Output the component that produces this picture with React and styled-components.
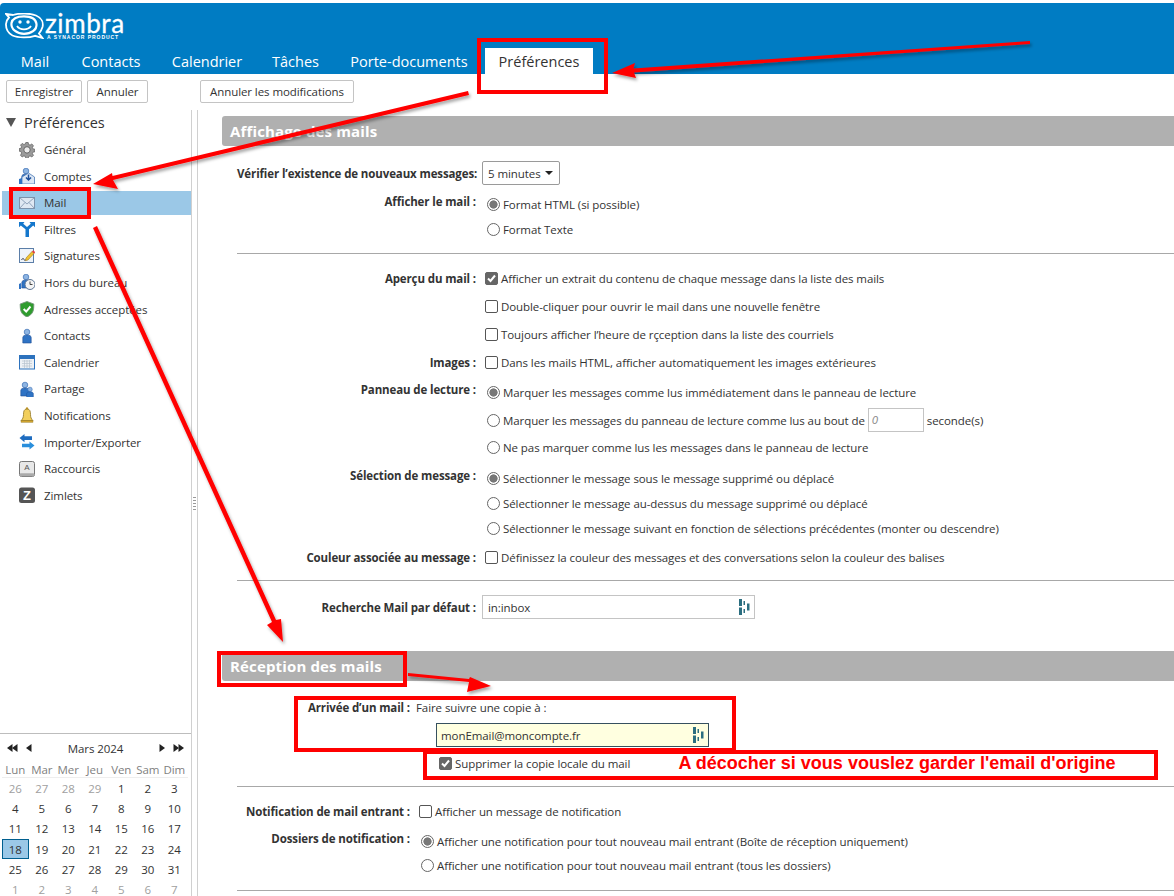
import React from "react";
import styled, { createGlobalStyle } from "styled-components";

const GlobalStyle = createGlobalStyle`
  html, body {
    margin: 0;
    padding: 0;
    background: #fff;
    font-family: "Open Sans", "Noto Sans", sans-serif;
    font-size: 11.5px;
    letter-spacing: -0.08px;
    color: #333;
  }
`;

const Page = styled.div`
  position: relative;
  width: 1174px;
  height: 896px;
  overflow: hidden;
  display: flex;
  flex-direction: column;
  background: #fff;
`;

const Header = styled.header`
  margin-top: 3px;
  height: 71px;
  flex: none;
  background: #007cc3;
  border-top-left-radius: 4px;
  display: flex;
  flex-direction: column;
`;

const Brand = styled.div`
  height: 45px;
  padding: 9px 0 0 5px;
  box-sizing: border-box;
  display: flex;
  gap: 1px;
  color: #fff;
`;

const BrandText = styled.div`
  display: flex;
  flex-direction: column;
  width: 84px;
`;

const BrandName = styled.span`
  font-family: Lato, sans-serif;
  font-size: 26px;
  line-height: 23px;
  font-weight: 400;
  letter-spacing: 0.6px;
  -webkit-text-stroke: 0.3px #fff;
`;

const BrandSub = styled.span`
  font-family: "Liberation Sans", sans-serif;
  font-size: 5px;
  line-height: 5px;
  font-weight: 700;
  letter-spacing: 0.95px;
  padding-left: 2px;
  white-space: nowrap;
`;

const Tabs = styled.nav`
  display: flex;
  gap: 1px;
  padding-left: 5px;
  height: 26px;
`;

const Tab = styled.div`
  width: ${(p) => p.$w}px;
  text-align: center;
  font-size: 14.5px;
  letter-spacing: 0;
  line-height: 28px;
  color: ${(p) => (p.$active ? "#333" : "#fff")};
  background: ${(p) => (p.$active ? "#fff" : "transparent")};
`;

const Toolbar = styled.div`
  height: 36px;
  flex: none;
  padding: 6px 0 0 6px;
  box-sizing: border-box;
  display: flex;
  align-items: flex-start;
  gap: 5px;
`;

const Button = styled.button`
  width: ${(p) => p.$w}px;
  height: 23px;
  padding: 0;
  margin-left: ${(p) => p.$gap || 0}px;
  border: 1px solid #c4c4c4;
  border-radius: 2px;
  background: #fff;
  color: #333;
  font: inherit;
  letter-spacing: inherit;
  line-height: 21px;
`;

const Body = styled.div`
  flex: 1;
  min-height: 0;
  display: flex;
`;

const Sidebar = styled.aside`
  width: 191px;
  flex: none;
  border-right: 1px solid #d0d0d0;
  display: flex;
  flex-direction: column;
  overflow: hidden;
`;

const Tree = styled.div`
  height: 623px;
  flex: none;
  box-sizing: border-box;
`;

const TreeHead = styled.div`
  height: 27.5px;
  box-sizing: border-box;
  padding: 0 0 3px 6px;
  display: flex;
  align-items: center;
  font-size: 14.5px;
  letter-spacing: 0;
  gap: 8px;
`;

const TreeArrow = styled.span`
  width: 0;
  height: 0;
  border-left: 5px solid transparent;
  border-right: 5px solid transparent;
  border-top: 9px solid #555;
`;

const TreeItem = styled.div`
  height: 24px;
  margin: 0 0 2.6px 2px;
  padding-left: 17px;
  display: flex;
  align-items: center;
  gap: 9px;
  background: ${(p) => (p.$selected ? "#9bc8e7" : "transparent")};
`;

const Calendar = styled.div`
  flex: none;
  border-top: 1px solid #bdbdbd;
`;

const CalNav = styled.div`
  height: 28px;
  padding: 0 7px;
  display: flex;
  align-items: center;
  justify-content: space-between;
`;

const CalArrows = styled.div`
  display: flex;
  gap: 8px;
  align-items: center;
`;

const CalGrid = styled.div`
  display: grid;
  grid-template-columns: repeat(7, 26.5px);
  padding-left: 2px;
`;

const CalHead = styled.div`
  height: 15px;
  line-height: 15px;
  text-align: center;
  color: #808080;
  border-bottom: 1px solid #eee;
`;

const CalDay = styled.div`
  height: 20.2px;
  line-height: 19px;
  box-sizing: border-box;
  text-align: center;
  color: ${(p) => (p.$muted ? "#a0a0a0" : "#333")};
  background: ${(p) => (p.$today ? "#9bc8e7" : "transparent")};
  border: 1px solid ${(p) => (p.$today ? "#005f8f" : "transparent")};
`;

const Sash = styled.div`
  width: 5px;
  flex: none;
  height: 786px;
  padding-top: 387px;
  box-sizing: border-box;
  display: flex;
  justify-content: center;
`;

const SashGrip = styled.div`
  width: 3px;
  height: 13px;
  background: repeating-linear-gradient(#999 0 1px, #fff 1px 3px);
`;

const Main = styled.main`
  flex: 1;
  min-width: 0;
  border-left: 1px solid #d0d0d0;
  padding: 6px 0 0 24px;
  overflow: hidden;
`;

const SectionTitle = styled.h2`
  margin: ${(p) => p.$top || 0}px 0 0;
  height: 30px;
  padding-left: 8px;
  background: #b0b0b0;
  border-radius: 3px 0 0 3px;
  color: #fff;
  font-size: 15px;
  letter-spacing: 0.15px;
  line-height: 31px;
  font-weight: 700;
`;

const Form = styled.div`
  padding-left: 15px;
`;

const Row = styled.div`
  height: ${(p) => p.$h}px;
  margin-top: ${(p) => p.$top || 0}px;
  display: grid;
  grid-template-columns: ${(p) => p.$col || 239}px 1fr;
  align-items: center;
`;

const Label = styled.div`
  text-align: right;
  font-weight: 700;
  letter-spacing: -0.12px;
  white-space: nowrap;
  padding-bottom: ${(p) => p.$raise || 0}px;
`;

const Value = styled.div`
  display: flex;
  align-items: center;
  white-space: nowrap;
  padding-left: ${(p) => p.$indent || 0}px;
`;

const Divider = styled.hr`
  margin: ${(p) => p.$top}px 0 ${(p) => p.$bottom}px;
  border: 0;
  height: 1px;
  background: #a8a8a8;
`;

const Radio = styled.span`
  width: 13px;
  height: 13px;
  box-sizing: border-box;
  flex: none;
  margin-right: 3px;
  border-radius: 50%;
  border: 1px solid #666;
  background: ${(p) => (p.$on ? "radial-gradient(circle, #777 0 3.8px, #fff 4.4px)" : "#fff")};
`;

const Check = styled.span`
  width: 13px;
  height: 13px;
  box-sizing: border-box;
  flex: none;
  margin-right: 3px;
  border-radius: 2px;
  border: 1px solid ${(p) => (p.$on ? "#666" : "#555")};
  background: ${(p) => (p.$on ? "#666" : "#fff")};
  display: flex;
  align-items: center;
  justify-content: center;
`;

const Select = styled.div`
  width: 78px;
  height: 24px;
  box-sizing: border-box;
  margin-left: 6px;
  padding: 0 6px 0 5px;
  border: 1px solid #9a9a9a;
  border-radius: 2px;
  display: flex;
  align-items: center;
  justify-content: space-between;
`;

const Caret = styled.span`
  width: 0;
  height: 0;
  border-left: 4px solid transparent;
  border-right: 4px solid transparent;
  border-top: 4px solid #222;
`;

const Field = styled.div`
  width: ${(p) => p.$w}px;
  height: ${(p) => p.$h}px;
  box-sizing: border-box;
  margin-left: ${(p) => p.$left || 0}px;
  padding: 0 4px 0 ${(p) => p.$pad || 4}px;
  border: 1px solid ${(p) => (p.$focus ? "#36505f" : "#c4c4c4")};
  background: ${(p) => (p.$focus ? "#ffffe0" : "#fff")};
  display: flex;
  align-items: center;
  justify-content: space-between;
`;

const SmallInput = styled.span`
  width: 56px;
  height: 24px;
  box-sizing: border-box;
  margin: 0 3px;
  padding-left: 3px;
  border: 1px solid #c4c4c4;
  color: #888;
  font-style: italic;
  line-height: 22px;
`;

const Overlay = styled.svg`
  position: absolute;
  left: 0;
  top: 0;
  pointer-events: none;
`;

const Note = styled.div`
  position: absolute;
  left: 662px;
  top: 754px;
  width: 470px;
  height: 22px;
  background: #fff;
  text-align: center;
  color: #f00;
  font-family: "Liberation Sans", sans-serif;
  font-size: 18px;
  letter-spacing: 0;
  font-weight: 700;
  line-height: 18px;
  white-space: nowrap;
`;

const Logo = () => (
  <svg width="39" height="26" viewBox="0 0 39 26" fill="none" stroke="#fff" style={{ marginTop: 1 }}>
    <path d="M1 1 L8 2 C14 0 25 0 31 2.500 C37 5 38.500 10 37.500 14 C36.500 17 35.500 19 34 20.500 L37.500 25 L30 22.800 C24 25 13 25 7.500 22.500 C2 19.500 .8 15 1 11 C1.200 8 2.500 6 4 4.500 Z" strokeWidth="1.800" />
    <path d="M6.500 10 C7.500 5 13 3.300 19 3.300 C26 3.300 31 6 31.500 11 C32 17 26 20.800 19 20.800 C12 20.800 5.500 16 6.500 10 Z" strokeWidth="2.200" />
    <circle cx="15" cy="9" r="1.700" fill="#fff" stroke="none" />
    <circle cx="23" cy="9" r="1.700" fill="#fff" stroke="none" />
    <path d="M12 13 C15 17.500 23 17.500 26 13" strokeWidth="1.800" />
  </svg>
);

const Person = ({ x = 0, y = 0, c = "#2f73c4" }) => (
  <g transform={`translate(${x} ${y})`}>
    <circle cx="5" cy="3" r="2.800" fill="#8db4e2" stroke="#3c70b5" strokeWidth=".7" />
    <path d="M.8 14 V8.500 C.8 6.800 2.500 6 5 6 C7.500 6 9.200 6.800 9.200 8.500 V14 Z" fill={c} stroke="#1e4f96" strokeWidth=".6" />
  </g>
);

const icons = {
  gear: (
    <>
      <path d="M6.800.5h2.400l.4 2 1.500.6 1.700-1.100 1.700 1.700-1.100 1.700.6 1.500 2 .4v2.400l-2 .4-.6 1.500 1.100 1.700-1.700 1.700-1.700-1.100-1.500.6-.4 2H6.800l-.4-2-1.500-.6-1.700 1.100-1.700-1.700L2.600 11l-.6-1.500-2-.4V6.700l2-.4.6-1.500-1.100-1.700 1.700-1.700 1.700 1.100 1.500-.6Z" fill="#9a9a9a" stroke="#5a5a5a" strokeWidth=".7" />
      <circle cx="8" cy="7.900" r="3.200" fill="#ececec" stroke="#5a5a5a" strokeWidth=".9" />
    </>
  ),
  accounts: (
    <>
      <Person x={2} y={0} />
      <path d="M3 9 9.500 5l6 4v7H3Z" fill="#dbe6f4" stroke="#4a78b5" strokeWidth=".8" />
      <path d="M9.500 6.500v5M7 9.500 9.500 12l2.500-2.500" fill="none" stroke="#1c4f9c" strokeWidth="1.500" />
      <path d="M0 16v-5l3-1v6Z" fill="#2f73c4" />
    </>
  ),
  mail: (
    <>
      <rect x=".5" y="2.500" width="15" height="11" fill="#dfe8f3" stroke="#7d93ad" />
      <path d="M.5 2.500 8 9l7.500-6.500M.5 13.500 6 7.500M15.500 13.500 10 7.500" fill="none" stroke="#7d93ad" strokeWidth=".8" />
    </>
  ),
  filter: (
    <path d="M0 1h5.500L4.200 2.800 8 6l3.800-3.200L10.500 1H16v5.200l-1.800-1.700L10 8.300V16H6.500V8.300L1.800 4.500 0 6.200Z" fill="#1477cc" />
  ),
  signature: (
    <>
      <rect x=".5" y=".5" width="14" height="14" fill="#eef3f9" stroke="#5b7ea8" />
      <path d="M2.500 12c1-2 2-2 2.500-.5s1.500 1 2 0" fill="none" stroke="#223" strokeWidth=".8" />
      <path d="M7 10 13 3.500l2 2L9 12l-2.500.7Z" fill="#f2c230" stroke="#8a6a10" strokeWidth=".5" />
      <path d="M13 3.500l1.200-1.300 2 2L15 5.500Z" fill="#e43c3c" />
    </>
  ),
  away: (
    <>
      <Person x={2} y={0} />
      <path d="M0 15V10l2-1v6Z" fill="#2f73c4" />
      <circle cx="11" cy="10.500" r="5" fill="#f4f4f4" stroke="#5d7696" />
      <path d="M11 7.500v3h2.500" fill="none" stroke="#333" strokeWidth=".9" />
    </>
  ),
  shield: (
    <>
      <path d="M8 .5 14.800 3c0 6-.3 10-6.800 13C1.500 13 1.200 9 1.200 3Z" fill="#2f9c2e" stroke="#75947a" strokeWidth=".9" />
      <path d="M4.700 8 7.200 10.600 11.500 5.500" fill="none" stroke="#fff" strokeWidth="2" />
    </>
  ),
  contact: <Person x={3} y={1} />,
  calendar: (
    <>
      <rect x=".5" y="1.500" width="15" height="13.500" fill="#eef1f5" stroke="#2d72bd" />
      <rect x=".5" y="1.500" width="15" height="3.500" fill="#2d72bd" />
      <path d="M3 7h10M3 9.500h10M3 12h10M5.500 6v8M8 6v8M10.500 6v8" stroke="#b8c3cf" strokeWidth=".7" />
    </>
  ),
  share: (
    <>
      <Person x={1} y={1} />
      <g transform="translate(7 6) scale(.8)"><Person /></g>
    </>
  ),
  bell: (
    <>
      <circle cx="8" cy="1.500" r="1.200" fill="#c79b2c" />
      <path d="M8 2C11 2 11.500 4.500 11.500 7.500c0 3 .9 4.500 2.300 6H2.200c1.400-1.500 2.300-3 2.300-6C4.500 4.500 5 2 8 2Z" fill="#f2cf5c" stroke="#8f7422" strokeWidth=".8" />
      <rect x="2" y="13.500" width="12" height="1.800" fill="#d2a52f" stroke="#8f7422" strokeWidth=".4" />
    </>
  ),
  transfer: (
    <>
      <path d="M.5 4 5.500 0v2.300H13V6H5.500v2.300Z" fill="#1e6cc0" />
      <path d="M15.500 11.500 10.500 7.500v2.300H3v3.500h7.500V15.500Z" fill="#2a8fdc" />
    </>
  ),
  key: (
    <>
      <rect x=".5" y=".5" width="15" height="15" rx="2" fill="#e8e8e8" stroke="#777" />
      <rect x=".8" y="12.200" width="14.400" height="3" rx="1" fill="#aaa" />
      <text x="8" y="9" textAnchor="middle" fontSize="8" fontFamily="Liberation Sans" fill="#555">A</text>
    </>
  ),
  zimlet: (
    <>
      <rect x="0" y=".5" width="16" height="15.500" rx="2.500" fill="#555" />
      <text x="8" y="13" textAnchor="middle" fontSize="13" fontWeight="700" fontFamily="Liberation Sans" fill="#fff">Z</text>
    </>
  ),
};

const Icon = ({ name }) => (
  <svg width="16" height="16" viewBox="0 0 16 16">{icons[name]}</svg>
);

const FieldIcon = () => (
  <svg width="11" height="16" viewBox="0 0 11 16" fill="#2b6e80">
    <rect x="0" y="0" width="3" height="7" />
    <rect x="0" y="8.500" width="3" height="7.500" />
    <rect x="4.500" y="2" width="1.500" height="4" />
    <rect x="4.500" y="10" width="1.500" height="4" />
    <rect x="8" y="4.500" width="2.500" height="7" />
  </svg>
);

const Tick = () => (
  <svg width="11" height="11" viewBox="0 0 11 11">
    <path d="M2 5.500 4.500 8 9 2.500" fill="none" stroke="#fff" strokeWidth="2" />
  </svg>
);

const Triangles = ({ dir, n }) => (
  <svg width={n === 2 ? 11 : 6} height="8" viewBox={`0 0 ${n === 2 ? 11 : 6} 8`} fill="#222">
    {[...Array(n)].map((_, i) => (
      <path
        key={i}
        transform={`translate(${i * 5} 0)`}
        d={dir === "l" ? "M5.500 0v8L0 4Z" : "M.5 0v8L6 4Z"}
      />
    ))}
  </svg>
);

const treeItems = [
  ["gear", "Général"],
  ["accounts", "Comptes"],
  ["mail", "Mail"],
  ["filter", "Filtres"],
  ["signature", "Signatures"],
  ["away", "Hors du bureau"],
  ["shield", "Adresses acceptées"],
  ["contact", "Contacts"],
  ["calendar", "Calendrier"],
  ["share", "Partage"],
  ["bell", "Notifications"],
  ["transfer", "Importer/Exporter"],
  ["key", "Raccourcis"],
  ["zimlet", "Zimlets"],
];

const dayNames = ["Lun", "Mar", "Mer", "Jeu", "Ven", "Sam", "Dim"];
const days = [
  26, 27, 28, 29, 1, 2, 3, 4, 5, 6, 7, 8, 9, 10, 11, 12, 13, 14, 15, 16, 17, 18, 19, 20, 21, 22, 23,
  24, 25, 26, 27, 28, 29, 30, 31, 1, 2, 3, 4, 5, 6, 7,
];

const Annotations = () => (
  <Overlay width="1174" height="896" viewBox="0 0 1174 896">
    <defs>
      <filter id="shade" x="-10%" y="-10%" width="120%" height="120%">
        <feDropShadow dx="1.500" dy="2.500" stdDeviation="1.500" floodColor="#000" floodOpacity=".35" />
      </filter>
    </defs>
    <g fill="#f00" filter="url(#shade)">
      <polygon points="1030,41 1030,44 634,72.500 636,78 612,73 635,63 633.500,68.500" />
      <polygon points="468,91 469,95 113,180 118,189 93,184 112,173 112.500,176" />
      <polygon points="93,228 97,226 276,620 281,619 283,642 267,625 272,622" />
      <polygon points="408,673 408,676 469,682 467,692 491,686 470,677 469,679" />
    </g>
    <g fill="none" stroke="#f00" strokeWidth="4">
      <rect x="479" y="40" width="127" height="52" />
      <rect x="11" y="189" width="78" height="28" />
      <rect x="219" y="653" width="186" height="32" />
      <rect x="296" y="698" width="438" height="52" />
      <rect x="425" y="752" width="731" height="26" />
    </g>
  </Overlay>
);

export default function App() {
  return (
    <>
      <GlobalStyle />
      <Page>
        <Header>
          <Brand>
            <Logo />
            <BrandText>
              <BrandName>zimbra</BrandName>
              <BrandSub>A SYNACOR PRODUCT</BrandSub>
            </BrandText>
          </Brand>
          <Tabs>
            <Tab $w={60}>Mail</Tab>
            <Tab $w={90}>Contacts</Tab>
            <Tab $w={100}>Calendrier</Tab>
            <Tab $w={75}>Tâches</Tab>
            <Tab $w={150}>Porte-documents</Tab>
            <Tab $w={108} $active>Préférences</Tab>
          </Tabs>
        </Header>

        <Toolbar>
          <Button $w={76}>Enregistrer</Button>
          <Button $w={61}>Annuler</Button>
          <Button $w={154} $gap={47}>Annuler les modifications</Button>
        </Toolbar>

        <Body>
          <Sidebar>
            <Tree>
              <TreeHead>
                <TreeArrow />
                Préférences
              </TreeHead>
              {treeItems.map(([icon, label]) => (
                <TreeItem key={label} $selected={label === "Mail"}>
                  <Icon name={icon} />
                  {label}
                </TreeItem>
              ))}
            </Tree>
            <Calendar>
              <CalNav>
                <CalArrows>
                  <Triangles dir="l" n={2} />
                  <Triangles dir="l" n={1} />
                </CalArrows>
                Mars 2024
                <CalArrows>
                  <Triangles dir="r" n={1} />
                  <Triangles dir="r" n={2} />
                </CalArrows>
              </CalNav>
              <CalGrid>
                {dayNames.map((d) => (
                  <CalHead key={d}>{d}</CalHead>
                ))}
                {days.map((d, i) => (
                  <CalDay key={i} $muted={i < 4 || i > 34} $today={i === 21}>
                    {d}
                  </CalDay>
                ))}
              </CalGrid>
            </Calendar>
          </Sidebar>
          <Sash>
            <SashGrip />
          </Sash>
          <Main>
            <SectionTitle>Affichage des mails</SectionTitle>
            <Form>
              <Row $h={24} $top={15}>
                <Label>Vérifier l’existence de nouveaux messages:</Label>
                <Value>
                  <Select>
                    5 minutes
                    <Caret />
                  </Select>
                </Value>
              </Row>
              <Row $h={25} $top={7}>
                <Label $raise={6}>Afficher le mail :</Label>
                <Value $indent={11}>
                  <Radio $on />
                  Format HTML (si possible)
                </Value>
              </Row>
              <Row $h={25}>
                <span />
                <Value $indent={11}>
                  <Radio />
                  Format Texte
                </Value>
              </Row>
              <Divider $top={11} $bottom={10} />
              <Row $h={28}>
                <Label>Aperçu du mail :</Label>
                <Value $indent={9}>
                  <Check $on>
                    <Tick />
                  </Check>
                  Afficher un extrait du contenu de chaque message dans la liste des mails
                </Value>
              </Row>
              <Row $h={28}>
                <span />
                <Value $indent={9}>
                  <Check />
                  Double-cliquer pour ouvrir le mail dans une nouvelle fenêtre
                </Value>
              </Row>
              <Row $h={28}>
                <span />
                <Value $indent={9}>
                  <Check />
                  Toujours afficher l’heure de rçception dans la liste des courriels
                </Value>
              </Row>
              <Row $h={28}>
                <Label>Images :</Label>
                <Value $indent={9}>
                  <Check />
                  Dans les mails HTML, afficher automatiquement les images extérieures
                </Value>
              </Row>
              <Row $h={28} $top={2}>
                <Label $raise={6}>Panneau de lecture :</Label>
                <Value $indent={11}>
                  <Radio $on />
                  Marquer les messages comme lus immédiatement dans le panneau de lecture
                </Value>
              </Row>
              <Row $h={28}>
                <span />
                <Value $indent={11}>
                  <Radio />
                  Marquer les messages du panneau de lecture comme lus au bout de
                  <SmallInput>0</SmallInput>
                  seconde(s)
                </Value>
              </Row>
              <Row $h={26}>
                <span />
                <Value $indent={11}>
                  <Radio />
                  Ne pas marquer comme lus les messages dans le panneau de lecture
                </Value>
              </Row>
              <Row $h={26} $top={5}>
                <Label $raise={5}>Sélection de message :</Label>
                <Value $indent={11}>
                  <Radio $on />
                  Sélectionner le message sous le message supprimé ou déplacé
                </Value>
              </Row>
              <Row $h={25}>
                <span />
                <Value $indent={11}>
                  <Radio />
                  Sélectionner le message au-dessus du message supprimé ou déplacé
                </Value>
              </Row>
              <Row $h={25}>
                <span />
                <Value $indent={11}>
                  <Radio />
                  Sélectionner le message suivant en fonction de sélections précédentes (monter ou descendre)
                </Value>
              </Row>
              <Row $h={26} $top={3}>
                <Label>Couleur associée au message :</Label>
                <Value $indent={9}>
                  <Check />
                  Définissez la couleur des messages et des conversations selon la couleur des balises
                </Value>
              </Row>
              <Divider $top={10} $bottom={14} />
              <Row $h={24}>
                <Label>Recherche Mail par défaut :</Label>
                <Value>
                  <Field $w={273} $h={24} $left={6} $pad={5}>
                    in:inbox
                    <FieldIcon />
                  </Field>
                </Value>
              </Row>
            </Form>

            <SectionTitle $top={32}>Réception des mails</SectionTitle>
            <Form>
              <Row $h={20} $top={16} $col={173}>
                <Label>Arrivée d’un mail :</Label>
                <Value $indent={6}>Faire suivre une copie à :</Value>
              </Row>
              <Row $h={24} $top={6} $col={173}>
                <span />
                <Value>
                  <Field $w={273} $h={24} $left={26} $focus>
                    monEmail@moncompte.fr
                    <FieldIcon />
                  </Field>
                </Value>
              </Row>
              <Row $h={22} $top={5} $col={173}>
                <span />
                <Value $indent={29}>
                  <Check $on>
                    <Tick />
                  </Check>
                  Supprimer la copie locale du mail
                </Value>
              </Row>
              <Divider $top={12} $bottom={12} />
              <Row $h={24} $col={173}>
                <Label>Notification de mail entrant :</Label>
                <Value $indent={9}>
                  <Check />
                  Afficher un message de notification
                </Value>
              </Row>
              <Row $h={24} $top={6} $col={173}>
                <Label $raise={6}>Dossiers de notification :</Label>
                <Value $indent={11}>
                  <Radio $on />
                  Afficher une notification pour tout nouveau mail entrant (Boîte de réception uniquement)
                </Value>
              </Row>
              <Row $h={25} $col={173}>
                <span />
                <Value $indent={11}>
                  <Radio />
                  Afficher une notification pour tout nouveau mail entrant (tous les dossiers)
                </Value>
              </Row>
              <Divider $top={12} $bottom={0} />
            </Form>
          </Main>
        </Body>

        <Annotations />
        <Note>A décocher si vous vouslez garder l'email d'origine</Note>
      </Page>
    </>
  );
}
